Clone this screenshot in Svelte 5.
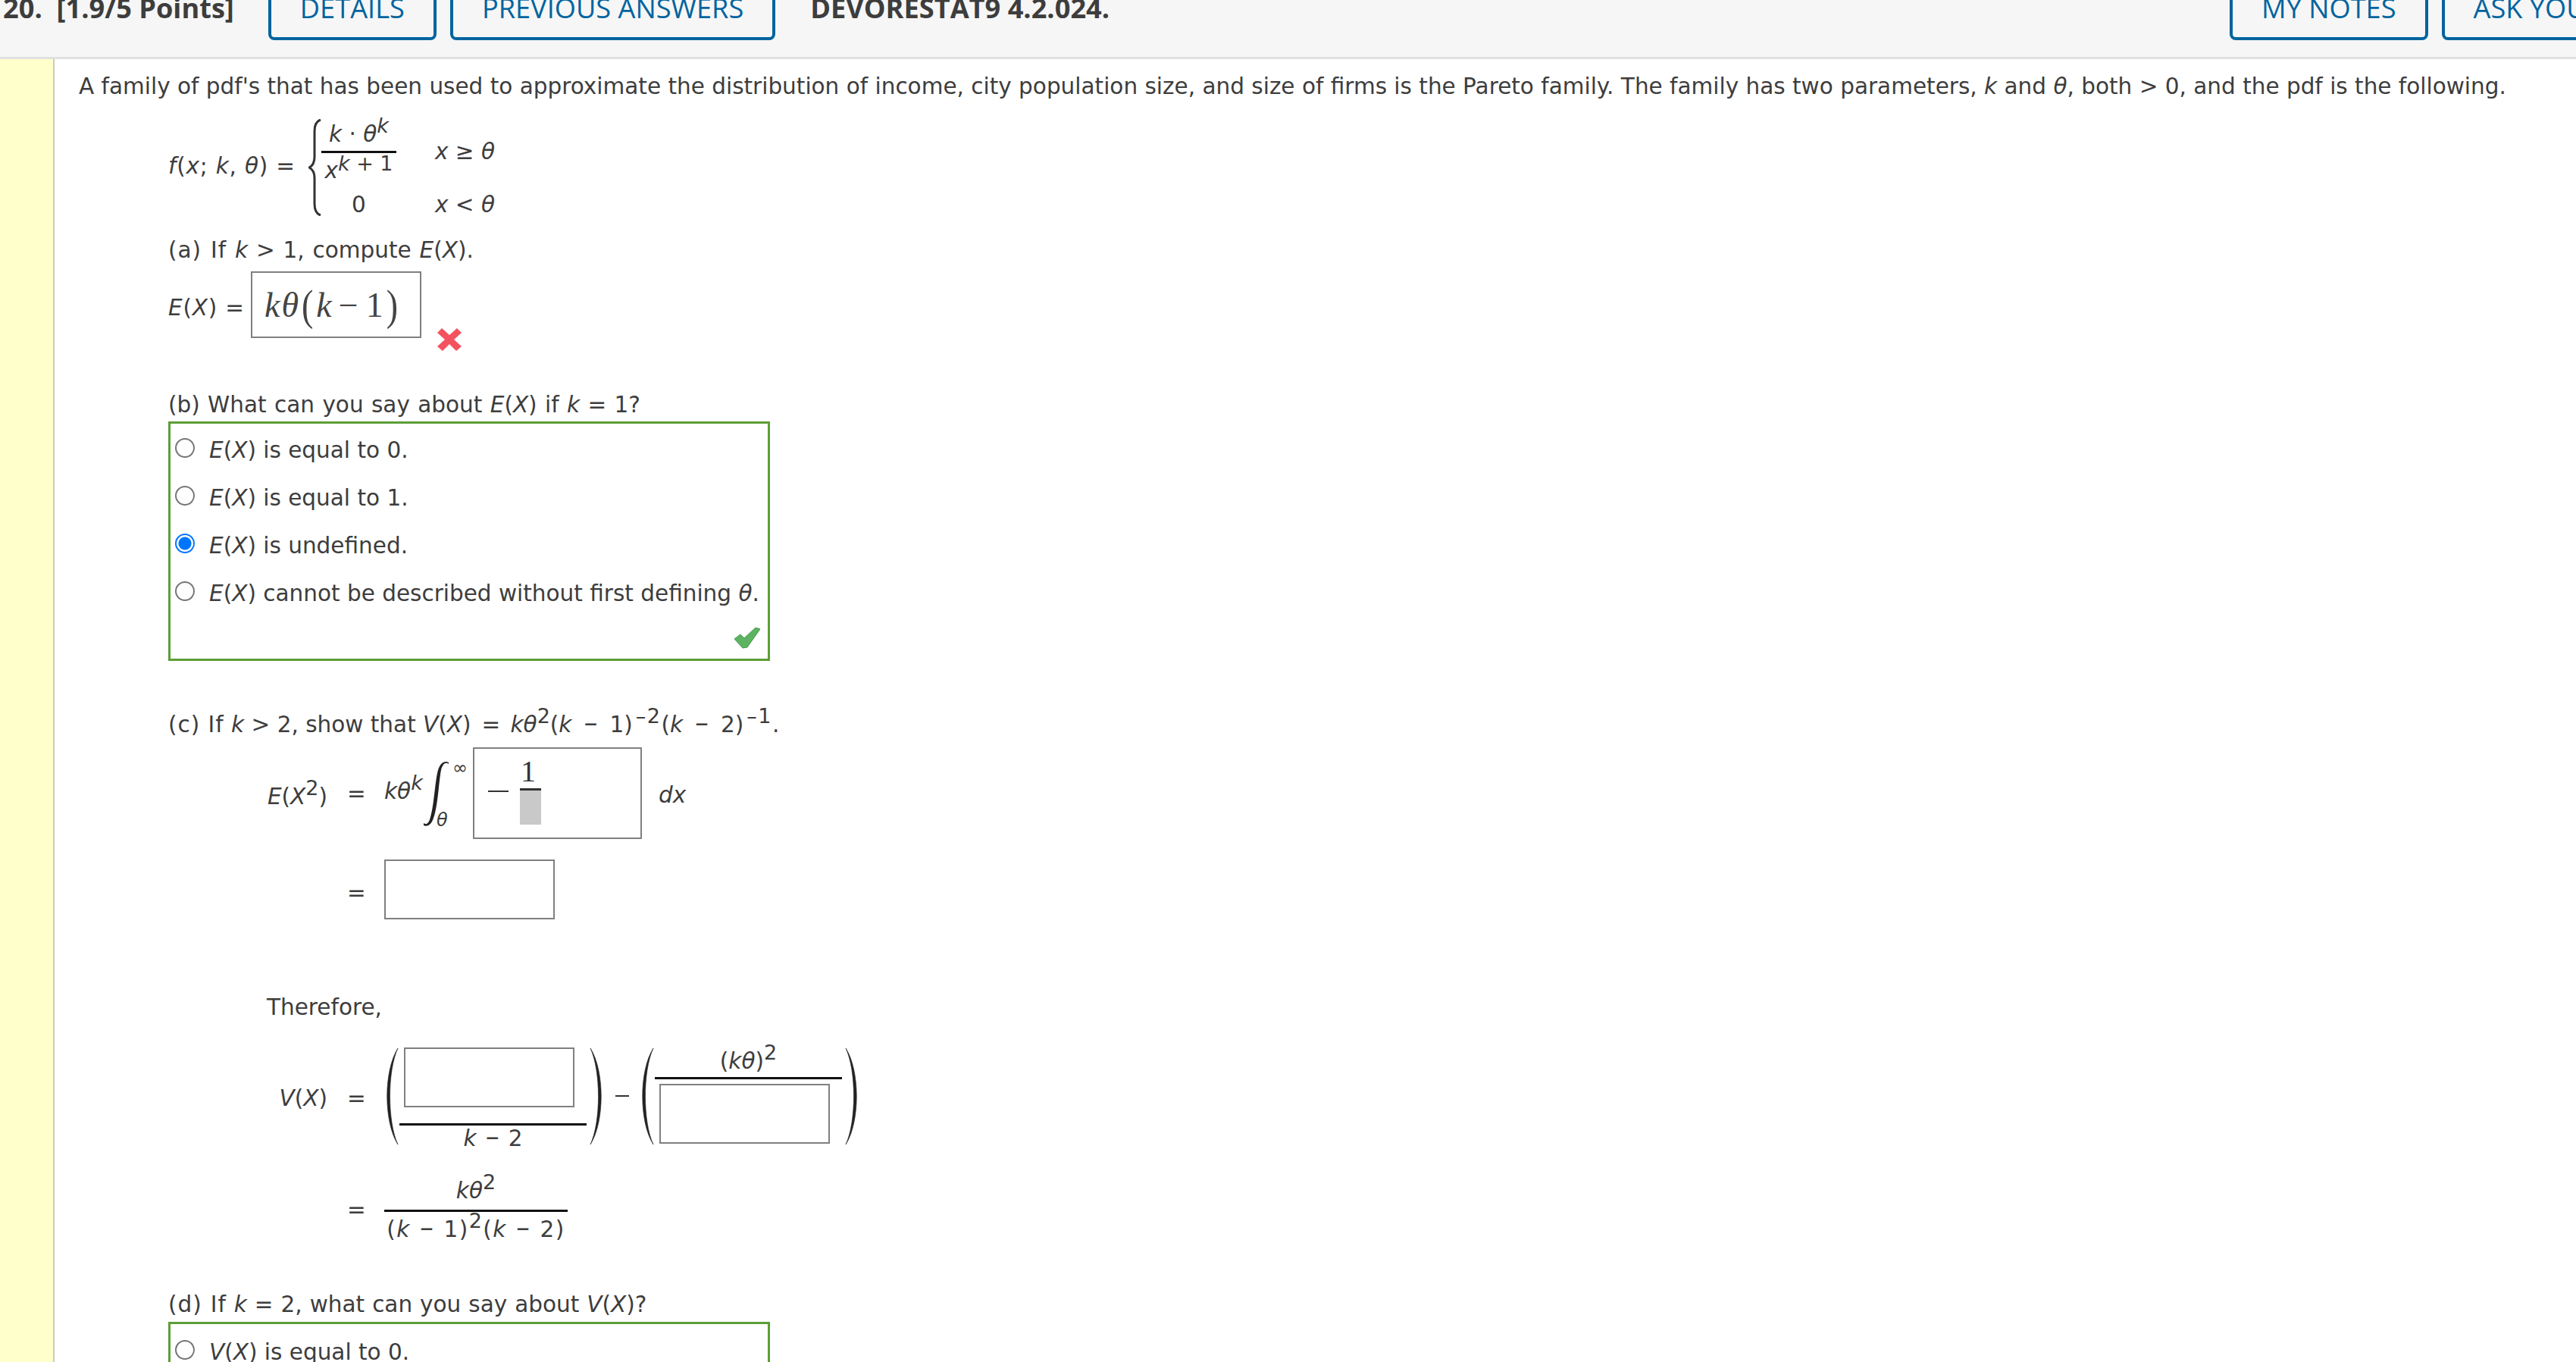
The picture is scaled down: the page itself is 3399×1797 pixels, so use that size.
<script>
    const partB = [
        { text: "is equal to 0.", picked: false },
        { text: "is equal to 1.", picked: false },
        { text: "is undefined.", picked: true },
    ];
</script>

<div class="page">
    <header class="bar">
        <span class="title">20. &nbsp;[1.9/5 Points]</span>
        <button class="tab first">DETAILS</button>
        <button class="tab">PREVIOUS ANSWERS</button>
        <span class="title source">DEVORESTAT9 4.2.024.</span>
        <button class="tab notes">MY NOTES</button>
        <button class="tab">ASK YOUR TEACHER</button>
    </header>

    <div class="body">
        <div class="stripe"></div>
        <main class="content">
            <p class="intro">
                A family of pdf's that has been used to approximate the distribution of income, city population size, and size of firms is the Pareto family. The family has two parameters, <i>k</i> and <i>θ</i>, both &gt; 0, and the pdf is the following.
            </p>

            <div class="indent">
                <div class="piecewise">
                    <span class="pw-label"><i>f</i>(<i>x</i>; <i>k</i>, <i>θ</i>) =</span>
                    <svg class="brace" width="18" height="128" viewBox="0 0 18 128">
                        <path d="M16 1C10 3 8 9 8 16V50C8 58 5 62 1 64C5 66 8 70 8 78V112C8 119 10 125 16 127" fill="none" stroke="#333" stroke-width="3" />
                    </svg>
                    <div class="cases">
                        <div class="frac case-frac">
                            <div class="pw-num"><i>k</i> · <i>θ</i><sup><i>k</i></sup></div>
                            <div class="rule"></div>
                            <div class="pw-den"><i>x</i><sup><i>k</i> + 1</sup></div>
                        </div>
                        <div class="cond first-cond"><i>x</i> ≥ <i>θ</i></div>
                        <div class="zero">0</div>
                        <div class="cond second-cond"><i>x</i> &lt; <i>θ</i></div>
                    </div>
                </div>

                <p class="line part-a"><span class="lead">(a) If</span> <i>k</i> &gt; 1, compute <i>E</i>(<i>X</i>).</p>
                <div class="answer-row">
                    <span class="answer-label"><i>E</i>(<i>X</i>) =</span>
                    <div class="box typed">
                        <i class="tk">k</i><i>θ</i><span class="big-paren">(</span><i>k</i><span class="typed-minus">−</span>1<span class="big-paren close">)</span>
                    </div>
                    <svg class="mark" width="32" height="30" viewBox="0 0 32 30">
                        <path d="M6 0L16 9L26 0L32 6L22 15L32 24L25 30L16 21L7 30L0 24L10 15L0 6Z" fill="#f4525f" />
                    </svg>
                </div>

                <p class="line part-b">(b) What can you say about <i>E</i>(<i>X</i>) if <i>k</i> = 1?</p>
                <div class="choices">
                    {#each partB as opt}
                        <label class="choice">
                            <input type="radio" name="partb" checked={opt.picked} />
                            <span><i>E</i>(<i>X</i>) {opt.text}</span>
                        </label>
                    {/each}
                    <label class="choice">
                        <input type="radio" name="partb" />
                        <span><i>E</i>(<i>X</i>) cannot be described without first defining <i>θ</i>.</span>
                    </label>
                    <div class="check-row">
                        <svg width="34" height="28" viewBox="0 0 34 28">
                            <path d="M0 15L8 9L13 14L28 0L34 2L17 26L11 27Z" fill="#5cb360" stroke="#4a9a4e" stroke-width="1" />
                        </svg>
                    </div>
                </div>

                <p class="line part-c">
                    <span class="lead">(c) If</span> <i>k</i> &gt; 2, show that <span class="wide-eq"><i>V</i>(<i>X</i>) =</span> <i>kθ</i><sup>2</sup>(<i>k</i><span class="mn">–</span>1)<sup class="neg-sup">–2</sup>(<i>k</i><span class="mn">–</span>2)<sup class="neg-sup">–1</sup>.
                </p>

                <div class="work">
                    <div class="step integral-step">
                        <span class="lbl low"><i>E</i>(<i>X</i><sup>2</sup>)</span>
                        <span class="eq">=</span>
                        <span class="coef"><i>kθ</i><sup><i>k</i></sup></span>
                        <svg class="integral" width="66" height="121" viewBox="0 0 66 121">
                            <path d="M34 22C30 19 26 22 24 30C21 44 20 80 13 96C10 103 5 105 1 103L1 100C5 103 8 100 10 92C15 75 16 44 20 30C23 20 29 17 34 20Z" fill="#222" />
                            <text class="limit" x="39" y="35">∞</text>
                            <text class="limit" x="18" y="104" font-style="italic">θ</text>
                        </svg>
                        <div class="box integrand">
                            <span class="neg"></span>
                            <div class="frac">
                                <div class="one">1</div>
                                <div class="rule dark"></div>
                                <div class="blank"></div>
                            </div>
                        </div>
                        <span class="dx"><i>dx</i></span>
                    </div>

                    <div class="step second">
                        <span class="lbl"></span>
                        <span class="eq low">=</span>
                        <div class="box small"></div>
                    </div>

                    <p class="line therefore">Therefore,</p>

                    <div class="step variance">
                        <span class="lbl v-lbl"><i>V</i>(<i>X</i>)</span>
                        <span class="eq v-lbl">=</span>
                        <svg class="paren open-first" width="17" height="127" viewBox="0 0 17 127"><path d="M15 0C-4 30 -4 97 15 127C1 97 1 30 15 0Z" fill="#222" stroke="#222" stroke-width="0.6" /></svg>
                        <div class="frac wide">
                            <div class="box small in-num"></div>
                            <div class="rule"></div>
                            <div class="den-k">
                                <i>k</i><span class="mn">–</span>2
                            </div>
                        </div>
                        <svg class="paren shut" width="17" height="127" viewBox="0 0 17 127"><path d="M2 0C21 30 21 97 2 127C16 97 16 30 2 0Z" fill="#222" stroke="#222" stroke-width="0.6" /></svg>
                        <span class="neg between"></span>
                        <svg class="paren" width="17" height="127" viewBox="0 0 17 127"><path d="M15 0C-4 30 -4 97 15 127C1 97 1 30 15 0Z" fill="#222" stroke="#222" stroke-width="0.6" /></svg>
                        <div class="frac wide">
                            <div class="num-sq">(<i>kθ</i>)<sup>2</sup></div>
                            <div class="rule"></div>
                            <div class="box small in-den"></div>
                        </div>
                        <svg class="paren shut" width="17" height="127" viewBox="0 0 17 127"><path d="M2 0C21 30 21 97 2 127C16 97 16 30 2 0Z" fill="#222" stroke="#222" stroke-width="0.6" /></svg>
                    </div>

                    <div class="step result">
                        <span class="lbl"></span>
                        <span class="eq">=</span>
                        <div class="frac result-frac">
                            <div class="res-num"><i>kθ</i><sup>2</sup></div>
                            <div class="rule"></div>
                            <div class="res-den">(<i>k</i><span class="mn">–</span>1)<sup>2</sup>(<i>k</i><span class="mn">–</span>2)</div>
                        </div>
                    </div>
                </div>

                <p class="line part-d"><span class="lead">(d) If</span> <i>k</i> = 2, what can you say about <i>V</i>(<i>X</i>)?</p>
                <div class="choices last">
                    <label class="choice">
                        <input type="radio" name="partd" />
                        <span><i>V</i>(<i>X</i>) is equal to 0.</span>
                    </label>
                </div>
            </div>
        </main>
    </div>
</div>

<style>
    :global(body) {
        margin: 0;
        background: #fff;
    }

    .page {
        height: 1797px;
        overflow: hidden;
        font-family: "DejaVu Sans", Verdana, sans-serif;
        font-size: 29.5px;
        color: #3d3d3d;
    }

    p {
        margin: 0;
    }

    sup {
        font-size: 27px;
        line-height: 0;
        vertical-align: 12px;
    }

    .mn {
        font-size: 36px;
        line-height: 0;
        margin: 0 9px;
    }

    .lead {
        letter-spacing: 1px;
    }

    /* header strip, its top is cut off by the viewport */
    .bar {
        display: flex;
        align-items: flex-end;
        box-sizing: border-box;
        width: 3399px;
        height: 114px;
        margin-top: -36px;
        padding-bottom: 22px;
        background: #f6f6f6;
        border-bottom: 3px solid #e0e0e0;
        font-family: "Open Sans", sans-serif;
        font-size: 36.2px;
        white-space: nowrap;
    }

    .title {
        flex-shrink: 0;
        padding-left: 4px;
        padding-bottom: 23px;
        font-weight: 700;
        line-height: 40px;
        color: #3d3d3d;
    }

    .source {
        margin-left: 46px;
        padding-left: 0;
    }

    .tab {
        flex-shrink: 0;
        box-sizing: border-box;
        height: 90px;
        margin: 0 0 0 18px;
        padding: 0 38px 19px;
        display: flex;
        align-items: flex-end;
        background: transparent;
        border: 4px solid #00649e;
        border-radius: 8px;
        font: inherit;
        line-height: 40px;
        color: #00649e;
    }

    .first {
        margin-left: 45px;
    }

    .notes {
        margin-left: 1478px;
    }

    .body {
        display: flex;
    }

    .stripe {
        flex: 0 0 70px;
        height: 1720px;
        background: #ffffcc;
        border-right: 2px solid #c8c8c8;
    }

    .content {
        flex: 1;
        padding: 16px 0 0 32px;
    }

    .intro {
        line-height: 40px;
        white-space: nowrap;
    }

    .indent {
        padding-left: 118px;
    }

    .line {
        line-height: 40px;
        white-space: nowrap;
    }

    /* piecewise definition */
    .piecewise {
        display: flex;
        align-items: flex-start;
        height: 133px;
        margin-top: 23px;
    }

    .pw-label {
        margin-top: 42px;
        width: 185px;
        letter-spacing: 0.8px;
        line-height: 40px;
        white-space: nowrap;
    }

    .brace {
        flex-shrink: 0;
    }

    .cases {
        display: grid;
        grid-template-columns: 99px auto;
        grid-template-rows: 91px 42px;
        column-gap: 51px;
        margin-left: -1px;
    }

    .frac {
        display: flex;
        flex-direction: column;
        align-items: center;
    }

    .rule {
        align-self: stretch;
        height: 3px;
        background: #111;
    }

    .pw-num {
        height: 45px;
        line-height: 40px;
        white-space: nowrap;
    }

    .pw-den {
        line-height: 46px;
        white-space: nowrap;
    }

    .pw-den sup {
        vertical-align: 10px;
    }

    .cond {
        line-height: 40px;
        align-self: center;
        white-space: nowrap;
    }

    .first-cond {
        padding-bottom: 6px;
    }

    .second-cond,
    .zero {
        padding-top: 2px;
    }

    .zero {
        text-align: center;
        align-self: center;
        line-height: 40px;
    }

    /* part a */
    .part-a {
        margin-top: 20px;
        word-spacing: 1.5px;
    }

    .answer-row {
        display: flex;
        align-items: center;
        height: 88px;
        margin-top: 8px;
    }

    .answer-label {
        width: 109px;
        padding-top: 7px;
        letter-spacing: 0.8px;
        line-height: 40px;
        white-space: nowrap;
    }

    .box {
        box-sizing: border-box;
        border: 2px solid #808080;
        background: #fff;
    }

    .typed {
        display: flex;
        align-items: center;
        width: 225px;
        height: 88px;
        padding-left: 16px;
        font-family: "Liberation Serif", serif;
        font-size: 46px;
        color: #444;
    }

    .tk {
        margin-right: 2px;
    }

    .big-paren {
        display: inline-block;
        margin: 0 4px;
        transform: scaleY(1.25);
    }

    .big-paren.close {
        margin-left: 4px;
    }

    .typed-minus {
        margin: 0 10px 0 9px;
    }

    .mark {
        align-self: flex-end;
        margin: 0 0 -17px 21px;
        flex-shrink: 0;
    }

    /* multiple choice */
    .part-b {
        margin-top: 68px;
        word-spacing: 1px;
    }

    .choices {
        box-sizing: border-box;
        width: 794px;
        height: 316px;
        margin-top: 2px;
        padding-top: 2px;
        border: 3px solid #5c9e36;
    }

    .choices.last {
        height: 120px;
        margin-top: 3px;
        padding-top: 4px;
    }

    .choice {
        display: flex;
        align-items: center;
        height: 63px;
        padding-left: 6px;
        white-space: nowrap;
    }

    .choice span {
        padding-top: 2px;
    }

    .choice input {
        appearance: none;
        flex-shrink: 0;
        box-sizing: border-box;
        width: 26px;
        height: 26px;
        margin: 0 19px 4px 0;
        border: 2px solid #767676;
        border-radius: 50%;
        background: #fff;
    }

    .choice input:checked {
        border-color: #0075ff;
        background: radial-gradient(circle, #0075ff 0 8px, #fff 9px);
    }

    .check-row {
        display: flex;
        justify-content: flex-end;
        padding: 15px 10px 0 0;
    }

    /* worked steps */
    .part-c {
        margin-top: 64px;
    }

    .part-c .mn {
        margin: 0 16px;
    }

    .wide-eq {
        word-spacing: 4.5px;
        margin-right: 4px;
    }

    .neg-sup {
        letter-spacing: 1.5px;
        margin-left: 4px;
    }

    .work {
        padding-left: 130px;
    }

    .step {
        display: flex;
        align-items: center;
        white-space: nowrap;
    }

    .lbl {
        flex-shrink: 0;
        width: 80px;
        text-align: right;
        line-height: 40px;
    }

    .eq {
        flex-shrink: 0;
        width: 26px;
        margin: 0 23px 0 26px;
        line-height: 40px;
    }

    .low {
        padding-top: 8px;
    }

    .integral-step {
        height: 121px;
        margin-top: 10px;
    }

    .coef {
        width: 51px;
        padding-bottom: 6px;
        line-height: 40px;
    }

    .integral {
        flex-shrink: 0;
    }

    .limit {
        font-size: 24px;
        fill: #3d3d3d;
        font-family: "DejaVu Sans", sans-serif;
    }

    .integrand {
        display: flex;
        align-items: flex-start;
        width: 223px;
        height: 121px;
        padding: 0 0 0 18px;
    }

    .neg {
        display: block;
        flex-shrink: 0;
        width: 27px;
        height: 2px;
        margin: 55px 15px 0 0;
        background: #333;
    }

    .one {
        height: 52px;
        font-family: "Liberation Serif", serif;
        font-size: 40px;
        line-height: 60px;
        color: #333;
        padding-right: 6px;
    }

    .rule.dark {
        width: 28px;
        background: #333;
    }

    .blank {
        width: 28px;
        height: 45px;
        background: #c9c9c9;
    }

    .dx {
        margin-left: 22px;
        padding-top: 4px;
        line-height: 40px;
    }

    .second {
        height: 79px;
        margin-top: 27px;
    }

    .small {
        width: 225px;
        height: 79px;
        flex-shrink: 0;
    }

    .therefore {
        margin-top: 96px;
    }

    .variance {
        align-items: flex-start;
        margin-top: 23px;
        height: 148px;
    }

    .v-lbl {
        margin-top: 57px;
    }

    .paren {
        flex-shrink: 0;
        margin-top: 11px;
    }

    .open-first {
        margin-left: 3px;
    }

    .paren.shut {
        margin-left: 3px;
    }

    .wide {
        width: 247px;
        flex-shrink: 0;
    }

    .in-num {
        align-self: flex-start;
        margin: 10px 0 21px 6px;
    }

    .den-k {
        padding-top: 2px;
        line-height: 30px;
    }

    .den-k .mn {
        margin: 0 12px;
    }

    .between {
        width: 18px;
        margin: 73px 17px 0 18px;
    }

    .num-sq {
        height: 30px;
        margin: 13px 0 6px;
        line-height: 30px;
    }

    .in-den {
        align-self: flex-start;
        margin: 6px 0 0 6px;
    }

    .result {
        align-items: flex-start;
        margin-top: 30px;
        height: 95px;
    }

    .result .eq {
        margin-top: 26px;
    }

    .result-frac {
        width: 242px;
    }

    .res-num {
        height: 46px;
        line-height: 42px;
    }

    .res-den {
        line-height: 46px;
        letter-spacing: 1.5px;
    }

    .res-den .mn {
        margin: 0 12px;
    }

    .part-d {
        margin-top: 56px;
        word-spacing: 0.6px;
    }
</style>
